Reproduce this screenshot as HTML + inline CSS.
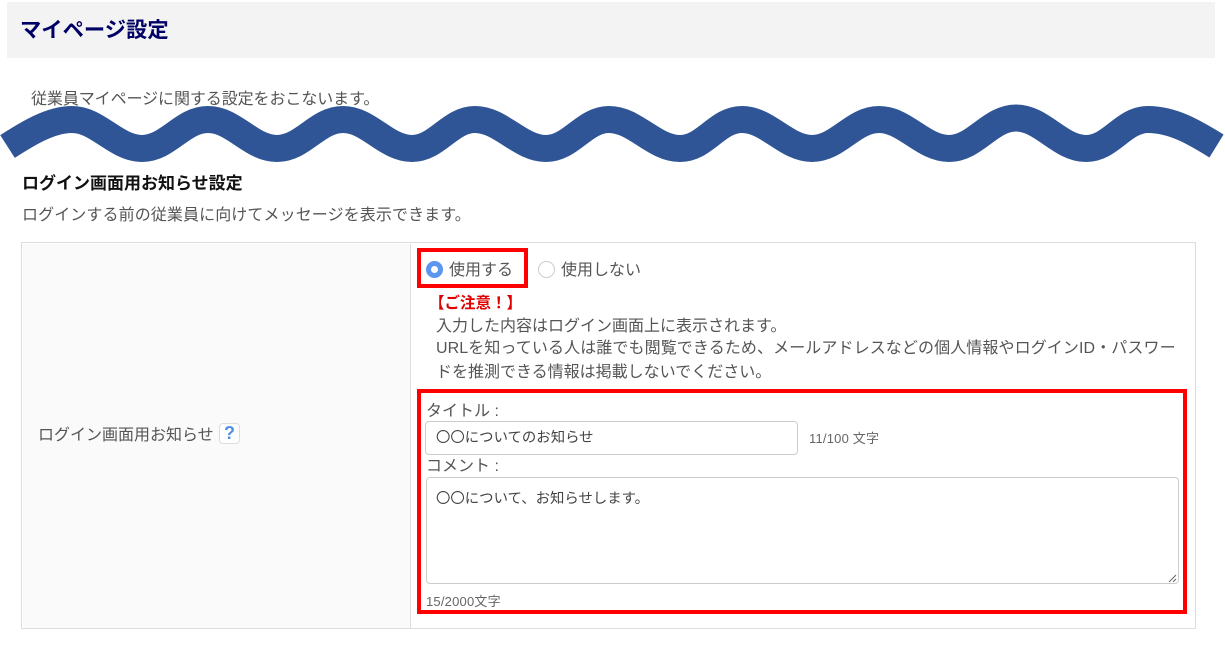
<!DOCTYPE html>
<html lang="ja"><head><meta charset="utf-8">
<style>
html,body{margin:0;padding:0;background:#fff}
#p{position:relative;width:1225px;height:648px;overflow:hidden;background:#fff;font-family:"Liberation Sans","Noto Sans CJK JP",sans-serif;color:#555}
#p div,#p svg{position:absolute;box-sizing:border-box}
.t{white-space:nowrap;font-size:16px;line-height:20px}
.s{font-size:14.4px;color:#444}
.c{font-size:13px;letter-spacing:.2px;color:#666}
</style></head><body><div id="p">
<div style="left:7px;top:2px;width:1208px;height:56px;background:#f3f3f3"></div>
<div class="t" style="left:20px;top:18px;font-size:21.3px;line-height:24px;font-weight:700;color:#000066">マイページ設定</div>
<div class="t" style="left:31px;top:90px;letter-spacing:-.08px">従業員マイページに関する設定をおこないます。</div>
<svg style="left:0;top:0" width="1225" height="648"><path fill="none" stroke="#2f5597" stroke-width="27" d="M7.5 146.5C27 134 50 119.5 72 119.5C98 119.5 116 148.5 142 148.5C168 148.5 182 119.5 208 119.5C234 119.5 251 148.5 277 148.5C303 148.5 317 119.5 343 119.5C369 119.5 386 148.5 412 148.5C437 148.5 450 119.5 475 119.5C501 119.5 520 148.5 546 148.5C571 148.5 584 119.5 609 119.5C635 119.5 654 148.5 680 148.5C705 148.5 717 119.5 742 119.5C768 119.5 786 148.5 812 148.5C838 148.5 853 119.5 879 119.5C905 119.5 923 148.5 949 148.5C975 148.5 990 118 1016 118C1042 118 1060 148.5 1086 148.5C1111 148.5 1123 119.5 1148 119.5C1174 119.5 1197 134 1216.5 146"/></svg>
<div class="t" style="left:22px;top:174px;font-size:17px;font-weight:700;color:#111">ログイン画面用お知らせ設定</div>
<div class="t" style="left:22px;top:206px;letter-spacing:.1px">ログインする前の従業員に向けてメッセージを表示できます。</div>

<div style="left:21px;top:242px;width:1175px;height:387px;border:1.5px solid #ddd;background:#fff"></div>
<div style="left:22.5px;top:243.5px;width:388px;height:384px;background:#fafafa;border-right:1.5px solid #ddd"></div>
<div class="t" style="left:38px;top:426px">ログイン画面用お知らせ</div>
<div style="left:219px;top:423px;width:21px;height:21px;border:1px solid #ddd;border-radius:4px;background:#fff;color:#4f8fe6;font-weight:700;font-size:18px;line-height:19px;text-align:center">?</div>

<div style="left:425.5px;top:260.5px;width:17px;height:17px;border-radius:50%;background:#fff;border:5px solid #5b97ee"></div>
<div class="t" style="left:449px;top:261px">使用する</div>
<div style="left:538px;top:261px;width:17px;height:17px;border-radius:50%;background:#fff;border:1px solid #ccc"></div>
<div class="t" style="left:561px;top:261px">使用しない</div>
<div style="left:417px;top:248px;width:111px;height:40px;border:4px solid #f00"></div>

<div class="t" style="left:429px;top:294px;font-size:15.5px;color:#e00000;font-weight:700">【ご注意！】</div>
<div class="t" style="left:436px;top:317px">入力した内容はログイン画面上に表示されます。</div>
<div class="t" style="left:436px;top:339px;letter-spacing:.1px">URLを知っている人は誰でも閲覧できるため、メールアドレスなどの個人情報やログインID・パスワー</div>
<div class="t" style="left:436px;top:363px">ドを推測できる情報は掲載しないでください。</div>

<div style="left:417px;top:389px;width:770px;height:225px;border:4px solid #f00"></div>
<div class="t" style="left:426px;top:402px">タイトル :</div>
<div style="left:425px;top:421px;width:373px;height:34px;border:1px solid #ccc;border-radius:4px;background:#fff"></div>
<div class="t s" style="left:436px;top:428px">〇〇についてのお知らせ</div>
<div class="t c" style="left:809px;top:429px">11/100 文字</div>
<div class="t" style="left:426px;top:457px">コメント :</div>
<div style="left:426px;top:477px;width:753px;height:107px;border:1px solid #ccc;border-radius:4px;background:#fff"></div>
<div class="t s" style="left:436px;top:489px">〇〇について、お知らせします。</div>
<svg style="left:1168px;top:574px" width="10" height="10"><path d="M1 8L8 1M5 8L8 5" stroke="#666" stroke-width="1" fill="none"/></svg>
<div class="t c" style="left:426px;top:592px">15/2000文字</div>
</div></body></html>
